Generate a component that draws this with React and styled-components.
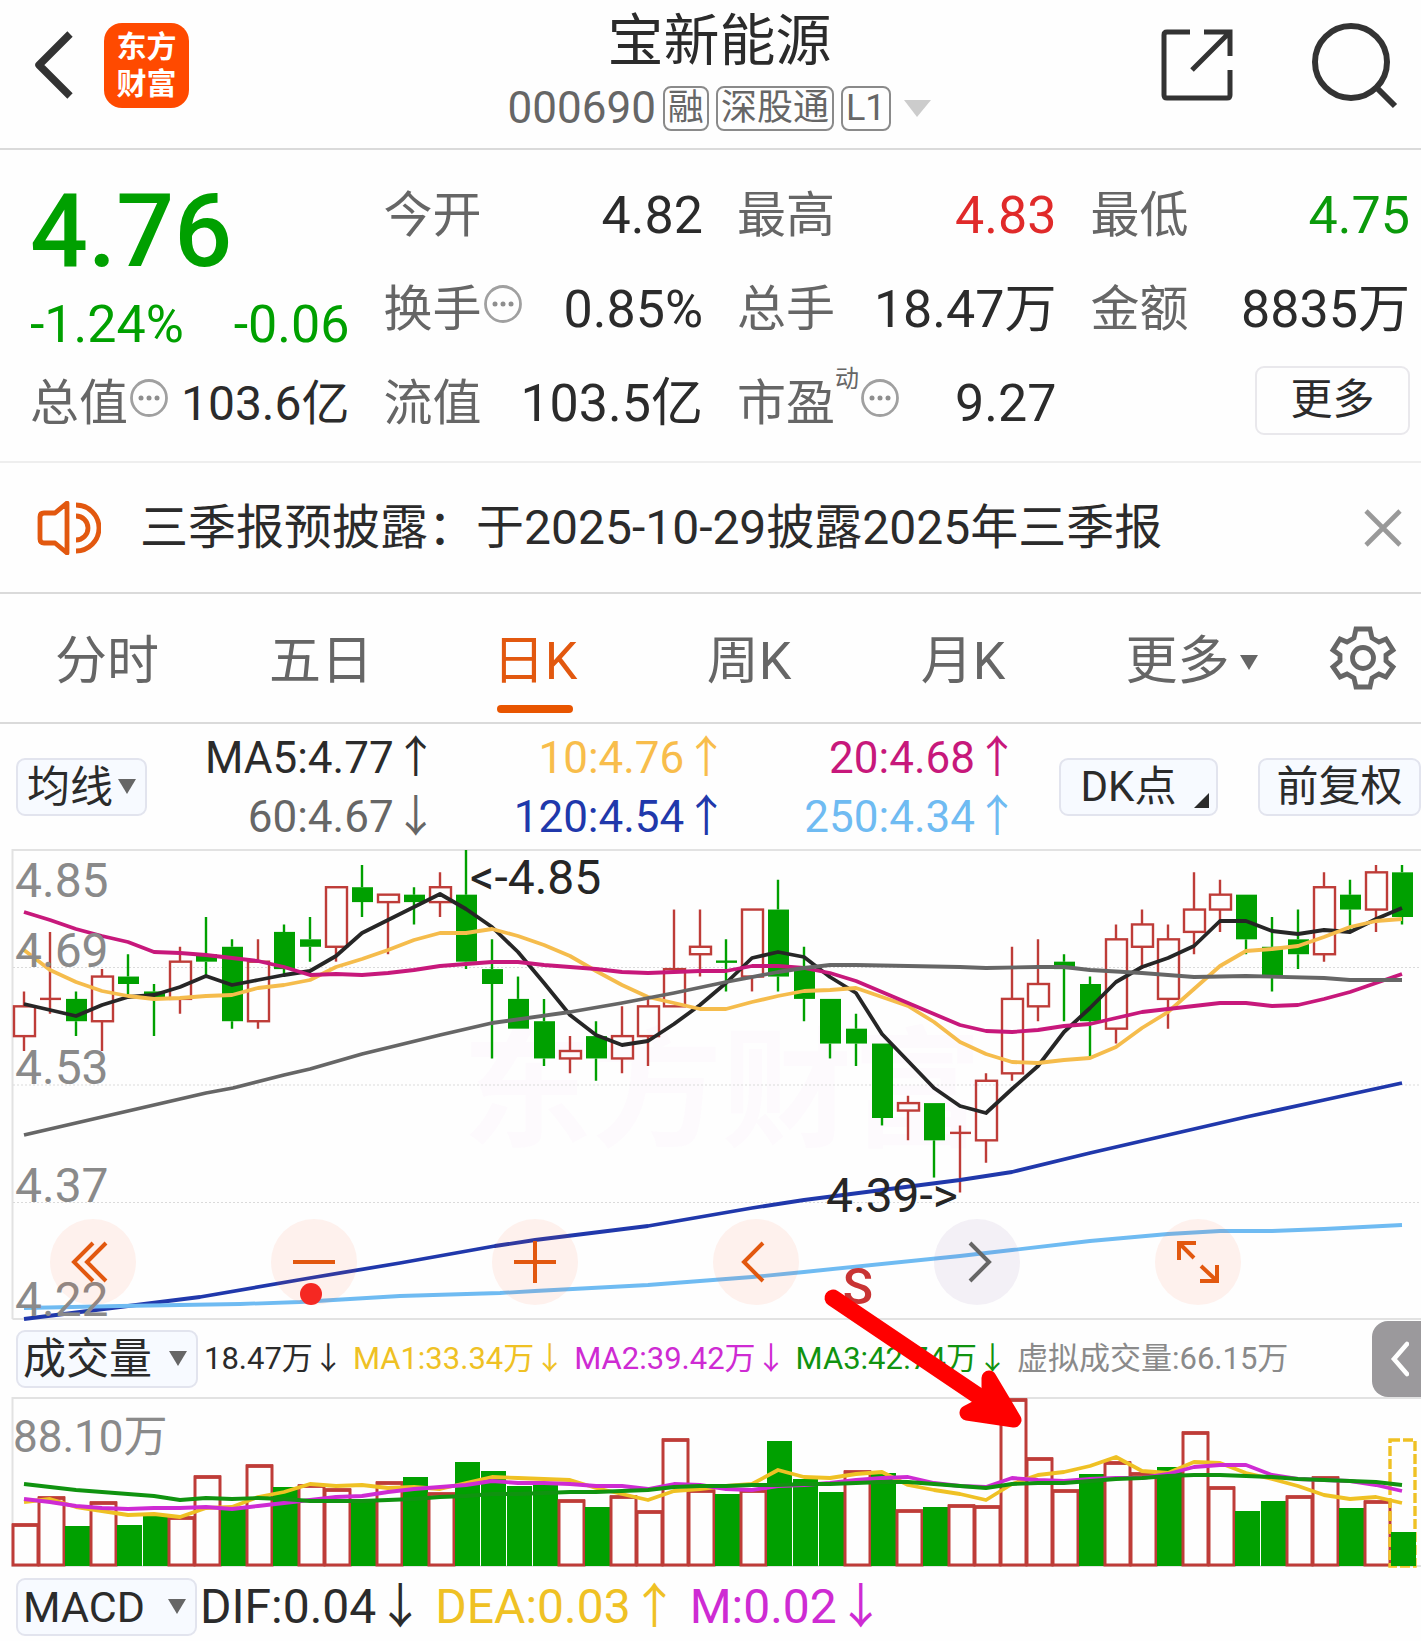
import React, { useState } from 'react';
import styled, { createGlobalStyle } from 'styled-components';

const GlobalStyle = createGlobalStyle`
	* {
		box-sizing: border-box;
	}

	body {
		margin: 0;
		background: #FEFEFE;
		color: #2B2B2B;
		font-family: Roboto, 'Noto Sans CJK SC', sans-serif;
	}

	button, select {
		font-family: inherit;
		color: inherit;
		background: none;
		border: 0;
		padding: 0;
		margin: 0;
		cursor: pointer;
	}

	svg {
		display: block;
	}
`;

const Page = styled.div`
	width: 100%;
	overflow: hidden;
`;

const Header = styled.header`
	display: grid;
	grid-template-columns: 1fr auto 1fr;
	height: 150px;
	padding: 0 14px 0 32px;
	border-bottom: 2px solid #DADADA;
`;

const HeaderSide = styled.div`
	display: flex;
	align-items: center;
	justify-content: ${(props) => (props.$end ? 'flex-end' : 'flex-start')};
	gap: ${(props) => (props.$end ? '76px' : '30px')};
	padding-bottom: 18px;
`;

const Logo = styled.a`
	display: flex;
	align-items: center;
	justify-content: center;
	width: 85px;
	height: 85px;
	border-radius: 18px;
	background: #FF4A00;
	color: #FFFFFF;
	font-size: 30px;
	line-height: 37px;
	font-weight: 700;
	text-align: center;
	text-decoration: none;
`;

const TitleBlock = styled.div`
	display: flex;
	flex-direction: column;
	align-items: center;
	padding-top: 7px;
`;

const Title = styled.h1`
	margin: 0;
	font-size: 56px;
	line-height: 68px;
	font-weight: 400;
`;

const SubTitle = styled.div`
	display: flex;
	align-items: center;
	gap: 7px;
	height: 66px;
	color: #666666;
	font-size: 44px;
`;

const Tag = styled.span`
	display: flex;
	align-items: center;
	height: 45px;
	padding: 0 3px;
	border: 2px solid #8A8A8A;
	border-radius: 8px;
	font-size: 36px;
	line-height: 40px;
`;

const Quote = styled.section`
	display: grid;
	grid-template-columns: repeat(4, 1fr);
	grid-template-rows: repeat(3, 94px);
	column-gap: 34px;
	padding: 19px 11px 10px 30px;
	border-bottom: 2px solid #EEEEEE;
`;

const PriceBlock = styled.div`
	grid-row: span 2;
	color: #00A000;
`;

const Price = styled.div`
	font-size: 102px;
	line-height: 124px;
	font-weight: 500;
`;

const Change = styled.div`
	display: flex;
	justify-content: space-between;
	font-size: 52px;
	line-height: 64px;
`;

const Stat = styled.div`
	display: flex;
	align-items: center;
	line-height: 60px;
	white-space: nowrap;
`;

const StatLabel = styled.span`
	color: #666666;
	font-size: 49px;
`;

const StatMark = styled.sup`
	align-self: flex-start;
	color: #666666;
	font-size: 24px;
	line-height: 32px;
	padding-top: 6px;
`;

const InfoButton = styled.button`
	margin: 0 0 12px 2px;
`;

const StatValue = styled.span`
	margin-left: auto;
	font-size: ${(props) => (props.$tight ? '48px' : '52px')};
	color: ${(props) => props.$color || '#2B2B2B'};
`;

const MoreButton = styled.button`
	justify-self: end;
	align-self: center;
	width: 155px;
	height: 69px;
	margin-bottom: 8px;
	border: 2px solid #E9E8EC;
	border-radius: 9px;
	font-size: 42px;
	line-height: 56px;
`;

const Notice = styled.section`
	display: flex;
	align-items: center;
	height: 131px;
	padding: 0 18px 0 37px;
	border-bottom: 2px solid #DADADA;
`;

const NoticeText = styled.p`
	flex: 1;
	margin: 0 0 0 39px;
	font-size: 48px;
	line-height: 64px;
	white-space: nowrap;
`;

const Tabs = styled.nav`
	display: flex;
	height: 130px;
	padding-right: 24px;
	border-bottom: 2px solid #DADADA;
`;

const Tab = styled.button`
	position: relative;
	display: flex;
	align-items: center;
	justify-content: center;
	gap: 10px;
	flex: ${(props) => (props.$wide ? 243 : 214)} 1 0;
	padding-top: 8px;
	font-size: 52px;
	line-height: 64px;
	color: ${(props) => (props.$active ? '#E2580F' : '#666666')};

	&::after {
		content: '';
		position: absolute;
		left: 50%;
		bottom: 9px;
		width: 76px;
		height: 8px;
		margin-left: -38px;
		border-radius: 4px;
		background: ${(props) => (props.$active ? '#E85500' : 'transparent')};
	}
`;

const SettingsButton = styled.button`
	margin-left: 16px;
`;

const Averages = styled.section`
	display: flex;
	align-items: center;
	height: 126px;
	padding-left: 16px;
`;

const Chip = styled.button`
	position: relative;
	flex: none;
	width: ${(props) => props.$width};
	height: 58px;
	margin-left: 40px;
	padding-right: ${(props) => (props.$corner ? '20px' : '0')};
	border: 2px solid #E2E4EE;
	border-radius: 9px;
	background: #F7FAFF;
	font-size: 42px;
	line-height: 52px;
	white-space: nowrap;
`;

const CornerMark = styled.svg`
	position: absolute;
	right: 7px;
	bottom: 6px;
`;

const SelectBox = styled.label`
	position: relative;
	flex: none;
	width: ${(props) => props.$width};
	height: 58px;
`;

const Select = styled.select`
	appearance: none;
	width: 100%;
	height: 100%;
	padding-left: ${(props) => (props.$narrow ? '9px' : '5px')};
	border: 2px solid #E2E4EE;
	border-radius: 9px;
	background: #F7FAFF;
	font-size: 43px;
`;

const SelectCaret = styled.svg`
	position: absolute;
	top: 21px;
	right: 11px;
	pointer-events: none;
`;

const AverageGrid = styled.div`
	flex: 1;
	display: grid;
	grid-template-columns: repeat(3, 1fr);
	grid-auto-rows: 59px;
	text-align: right;
	font-size: 44px;
	line-height: 60px;
	white-space: nowrap;
`;

const Colored = styled.span`
	color: ${(props) => props.$color};
`;

const Charts = styled.div`
	position: relative;
`;

const ChartBox = styled.div`
	position: relative;
`;

const Drawing = styled.svg`
	width: 100%;
	height: auto;
	overflow: visible;
`;

const Overlay = styled.svg`
	position: absolute;
	top: 0;
	left: 0;
	width: 100%;
	height: auto;
	pointer-events: none;
`;

const ChartTools = styled.div`
	position: absolute;
	left: 50px;
	right: 180px;
	bottom: 14px;
	display: flex;
	justify-content: space-between;
`;

const Tool = styled.button`
	position: relative;
	width: 86px;
	height: 86px;
	border-radius: 50%;
	background: ${(props) => (props.$muted ? 'rgba(120, 80, 150, 0.08)' : 'rgba(250, 90, 40, 0.08)')};
	color: ${(props) => (props.$muted ? '#666666' : '#E2580F')};
`;

const Dot = styled.span`
	position: absolute;
	left: 29px;
	bottom: 0;
	width: 22px;
	height: 22px;
	border-radius: 50%;
	background: #F52822;
`;

const VolumeBar = styled.div`
	display: flex;
	align-items: center;
	height: 79px;
	padding-left: 16px;
`;

const VolumeValues = styled.div`
	display: flex;
	flex: 1;
	gap: 9px;
	padding-left: 6px;
	font-size: 31px;
	line-height: 48px;
	white-space: nowrap;
`;

const Handle = styled.button`
	display: flex;
	align-items: center;
	justify-content: center;
	width: 49px;
	height: 76px;
	border-radius: 16px 0 0 16px;
	background: #9B999C;
`;

const MacdBar = styled.div`
	display: flex;
	align-items: center;
	height: 74px;
	padding: 6px 0 0 16px;
`;

const MacdValues = styled.div`
	display: flex;
	gap: 11px;
	padding-left: 3px;
	font-size: 48px;
	line-height: 58px;
	white-space: nowrap;
`;

const RED = '#BE3C38';
const GREEN = '#00A000';
const STEP = 26;
const FIRST = 24;
const CENT = 469 / 63;

// [up, high, body top, body bottom, low], in cents below 4.85
const candles = [
	[1, 19, 21, 25, 27], [1, 11, 20, 20, 22], [0, 19, 20, 23, 25], [1, 16, 17, 23, 27], [0, 14, 17, 18, 20], [0, 18, 19, 20, 25],
	[1, 13, 15, 20, 22], [0, 9, 14, 15, 17], [0, 12, 13, 23, 24], [1, 12, 15, 23, 24], [0, 10, 11, 16, 17], [0, 9, 12, 13, 15],
	[1, 5, 5, 13, 15], [0, 2, 5, 7, 9], [1, 6, 6, 7, 14], [0, 5, 6, 7, 10], [1, 3, 5, 7, 9], [0, 0, 6, 15, 16],
	[0, 12, 16, 18, 28], [0, 17, 20, 24, 24], [0, 20, 23, 28, 29], [1, 25, 27, 28, 30], [0, 23, 25, 28, 31], [1, 21, 25, 28, 30],
	[1, 20, 21, 25, 29], [1, 8, 16, 21, 21], [1, 8, 13, 14, 17], [0, 12, 15, 15, 19], [1, 8, 8, 17, 19], [0, 4, 8, 17, 19],
	[0, 13, 16, 20, 23], [0, 20, 20, 26, 28], [0, 22, 24, 26, 29], [0, 26, 26, 36, 37], [1, 33, 34, 35, 39], [0, 34, 34, 39, 44],
	[1, 37, 38, 38, 46], [1, 30, 31, 39, 42], [1, 13, 20, 30, 31], [1, 12, 18, 21, 23], [0, 14, 15, 16, 23], [0, 17, 18, 23, 28],
	[1, 10, 12, 24, 26], [1, 8, 10, 13, 16], [1, 10, 12, 20, 24], [1, 3, 8, 11, 14], [1, 4, 6, 8, 11], [0, 6, 6, 12, 14],
	[0, 9, 13, 17, 19], [0, 8, 12, 14, 16], [1, 3, 5, 14, 15], [0, 4, 6, 8, 11], [1, 2, 3, 8, 11], [0, 2, 3, 9, 10],
];

const ma5 = [154, 160, 166, 155, 147, 145, 137, 126, 135, 130, 125, 121, 106, 83, 70, 57, 44, 59, 77, 102, 133, 165, 185, 195, 191, 174, 155, 133, 108, 102, 107, 127, 143, 184, 211, 238, 256, 263, 239, 216, 182, 158, 132, 117, 108, 96, 71, 71, 81, 84, 80, 82, 69, 58];
const ma10 = [100, 120, 132, 141, 146, 149, 148, 146, 145, 138, 135, 130, 117, 109, 100, 90, 83, 83, 79, 86, 95, 106, 121, 135, 147, 153, 159, 159, 152, 146, 141, 140, 138, 147, 156, 172, 192, 204, 212, 213, 210, 208, 197, 178, 162, 139, 116, 101, 99, 96, 87, 77, 71, 69];
const ma20 = [62, 70, 79, 86, 92, 102, 103, 105, 108, 111, 117, 125, 124, 125, 123, 120, 116, 114, 112, 112, 115, 117, 119, 122, 123, 122, 121, 121, 116, 116, 118, 123, 131, 142, 153, 164, 175, 181, 182, 180, 176, 174, 168, 162, 159, 156, 153, 153, 156, 155, 149, 142, 133, 124];

const ma60 = '24,285 206,243 233,238 284,225 310,219 362,204 440,185 492,173 570,162 622,153 674,143 726,132 778,122 804,118 830,115 856,115 960,117 986,118 1038,117 1064,117 1090,120 1142,123 1194,127 1246,126 1324,128 1350,130 1402,130';
const ma120 = '24,469 120,457 200,447 310,428 400,413 495,396 535,390 648,376 752,358 804,350 960,330 1012,322 1090,303 1168,285 1246,267 1324,250 1402,233';
const ma250 = '24,458 120,456 240,454 300,452 400,446 500,443 535,441 648,435 752,427 804,422 960,406 1012,400 1090,391 1168,384 1220,381 1246,381 1272,381 1324,379 1402,375';

const volumes = [126, 99, 128, 104, 127, 118, 119, 78, 111, 67, 89, 87, 91, 102, 84, 79, 95, 64, 73, 88, 86, 102, 109, 98, 113, 41, 92, 96, 92, 43, 81, 94, 73, 75, 112, 109, 107, 108, 1, 60, 92, 76, 64, 75, 69, 34, 89, 113, 103, 98, 79, 110, 103, 134];
const hollowVolumes = [0, 1, 3, 6, 7, 9, 11, 12, 14, 16, 21, 23, 24, 25, 26, 28, 32, 34, 36, 37, 38, 39, 40, 42, 43, 45, 46, 49, 50, 52];
const volMa1 = [104, 101, 109, 113, 117, 116, 119, 110, 109, 99, 94, 86, 88, 87, 90, 89, 91, 85, 79, 80, 81, 82, 90, 96, 102, 93, 91, 88, 86, 72, 79, 80, 76, 74, 87, 92, 96, 102, 86, 77, 74, 68, 59, 73, 75, 64, 65, 75, 81, 88, 97, 101, 99, 105];
const volMa2 = [101, 104, 108, 110, 111, 110, 110, 109, 111, 108, 105, 102, 99, 98, 94, 91, 89, 87, 83, 85, 85, 86, 88, 88, 91, 86, 87, 91, 92, 88, 87, 85, 82, 80, 79, 85, 88, 89, 80, 82, 83, 81, 80, 80, 76, 69, 67, 67, 77, 81, 82, 83, 87, 93];
const volMa3 = [86, 89, 92, 94, 96, 98, 102, 100, 101, 100, 101, 103, 103, 103, 102, 101, 99, 98, 96, 96, 95, 94, 94, 93, 92, 89, 88, 88, 87, 87, 86, 86, 85, 84, 84, 86, 88, 90, 86, 85, 85, 83, 81, 80, 78, 77, 77, 78, 79, 81, 82, 83, 84, 87];

const averages = [
	['MA5:4.77↑', '#2B2B2B'],
	['10:4.76↑', '#F8BD4B'],
	['20:4.68↑', '#C7187B'],
	['60:4.67↓', '#666666'],
	['120:4.54↑', '#2038AB'],
	['250:4.34↑', '#6FBBF2'],
];

const volumeValues = [
	['18.47万↓', '#2B2B2B'],
	['MA1:33.34万↓', '#EFC124'],
	['MA2:39.42万↓', '#CE2BD3'],
	['MA3:42.74万↓', '#109310'],
	['虚拟成交量:66.15万', '#8A8A8A'],
];

const macdValues = [
	['DIF:0.04↓', '#2B2B2B'],
	['DEA:0.03↑', '#EFC124'],
	['M:0.02↓', '#CE2BD3'],
];

const axis = [['4.85', 47], ['4.69', 117], ['4.53', 234], ['4.37', 352], ['4.22', 466]];

const tabNames = ['分时', '五日', '日K', '周K', '月K', '更多'];

const toPoints = (list) => list.map((y, i) => `${FIRST + i * STEP},${y}`).join(' ');

const Caret = () => (
	<svg width="18" height="15" viewBox="0 0 18 15"><path d="M0 0H18L9 15Z" fill="#666666" /></svg>
);

const Info = ({ label }) => (
	<InfoButton aria-label={label}>
		<svg width="38" height="38" viewBox="0 0 38 38">
			<circle cx="19" cy="19" r="17.5" fill="none" stroke="#A0A0A0" strokeWidth="2.8" />
			<circle cx="11" cy="19" r="2.5" fill="#8E8E8E" />
			<circle cx="19" cy="19" r="2.5" fill="#8E8E8E" />
			<circle cx="27" cy="19" r="2.5" fill="#8E8E8E" />
		</svg>
	</InfoButton>
);

const Dropdown = ({ name, options, width, narrow }) => (
	<SelectBox $width={width}>
		<Select aria-label={name} $narrow={narrow} defaultValue={options[0]}>
			{options.map((option) => <option key={option}>{option}</option>)}
		</Select>
		<SelectCaret width="18" height="15" viewBox="0 0 18 15"><path d="M0 0H18L9 15Z" fill="#666666" /></SelectCaret>
	</SelectBox>
);

const Line = ({ points, color }) => (
	<polyline points={points} fill="none" stroke={color} strokeWidth="3.8" strokeLinejoin="round" />
);

const Candle = ({ data, index }) => {
	const [up, high, top, bottom, low] = data;
	const x = FIRST + index * STEP;
	const color = up ? RED : GREEN;
	const bodyTop = top * CENT;
	const bodyBottom = bottom * CENT;

	return (
		<g stroke={color} strokeWidth="2.4">
			<path d={`M${x} ${high * CENT}V${bodyTop}M${x} ${bodyBottom}V${low * CENT}`} />
			{top === bottom && <path d={`M${x - 10} ${bodyTop}H${x + 11}`} />}
			{top !== bottom && up === 1 && <rect x={x - 10} y={bodyTop} width="21" height={bodyBottom - bodyTop} fill="none" />}
			{top !== bottom && up === 0 && <rect x={x - 10} y={bodyTop} width="21" height={bodyBottom - bodyTop} fill={color} stroke="none" />}
		</g>
	);
};

const KLineChart = () => (
	<Drawing viewBox="0 0 1421 469">
		<text x="462" y="286" fontSize="130" fontWeight="700" fill="#FDFAFD">东方财富</text>
		<path d="M12.5 469V0H1421M12.5 469H1421" fill="none" stroke="#E2E2E2" strokeWidth="2" />
		<path d="M13 117.5H1421M13 235H1421M13 352.5H1421" stroke="#DADADA" strokeWidth="1.2" strokeDasharray="2 2" />
		{candles.map((data, index) => <Candle key={index} data={data} index={index} />)}
		<Line points={toPoints(ma5)} color="#262626" />
		<Line points={toPoints(ma10)} color="#F5BC4C" />
		<Line points={toPoints(ma20)} color="#C7187B" />
		<Line points={ma60} color="#666666" />
		<Line points={ma120} color="#2038AB" />
		<Line points={ma250} color="#6FBBF2" />
		<g fontSize="48" fill="#8A8A8A">
			{axis.map(([label, y]) => <text key={label} x="15" y={y}>{label}</text>)}
		</g>
		<g fontSize="48" fill="#262626">
			<text x="470" y="44">&lt;-4.85</text>
			<text x="826" y="362">4.39-&gt;</text>
		</g>
	</Drawing>
);

const VolumeChart = () => (
	<Drawing viewBox="0 0 1421 169">
		<path d="M12.5 169V0H1421M12.5 168H1421" fill="none" stroke="#E2E2E2" strokeWidth="2" />
		<text x="13" y="54" fontSize="44" fill="#8A8A8A">88.10万</text>
		{volumes.map((top, index) => {
			const x = FIRST + index * STEP;
			return hollowVolumes.includes(index) ? (
				<g key={index}>
					<rect x={x - 11} y={top + 1} width="25" height={166 - top} fill="#FEFEFE" stroke={RED} strokeWidth="3" />
					<path d={`M${x - 12} ${top + 1}H${x + 15}`} stroke={RED} strokeWidth="3.6" />
				</g>
			) : (
				<rect key={index} x={x - 11} y={top} width="25" height={168 - top} fill={GREEN} />
			);
		})}
		<rect x="1390" y="42" width="25" height="126" fill="none" stroke="#EFC124" strokeWidth="3.4" strokeDasharray="10 3" />
		<rect x="1391" y="134" width="25" height="34" fill={GREEN} />
		<Line points={toPoints(volMa1)} color="#EFC124" />
		<Line points={toPoints(volMa2)} color="#CE2BD3" />
		<Line points={toPoints(volMa3)} color="#109310" />
	</Drawing>
);

const toolIcons = [
	['最早', 'M43 24L24 43L43 62M56 24L37 43L56 62'],
	['缩小', 'M22 43H64'],
	['放大', 'M22 43H64M43 22V64'],
	['向左', 'M50 24L31 43L50 62'],
	['向右', 'M36 24L55 43L36 62'],
	['全屏', 'M24 41V24H41M24 24L39 39M62 46V62H45M62 62L46 47'],
];

const App = () => {
	const [activeTab, setActiveTab] = useState('日K');
	const [noticeOpen, setNoticeOpen] = useState(true);

	function renderTabs() {
		return tabNames.map((name) => (
			<Tab key={name} $active={name === activeTab} $wide={name === '更多'} onClick={() => setActiveTab(name)}>
				{name}
				{name === '更多' && <Caret />}
			</Tab>
		));
	}

	function renderValues(list) {
		return list.map(([text, color]) => <Colored key={text} $color={color}>{text}</Colored>);
	}

	return (
		<Page>
			<GlobalStyle />
			<Header>
				<HeaderSide>
					<button aria-label="返回">
						<svg width="42" height="70" viewBox="0 0 42 70" fill="none" stroke="#333333" strokeWidth="7.5" strokeLinejoin="round">
							<path d="M38 4L7 35L38 66" />
						</svg>
					</button>
					<Logo href="#">东方<br />财富</Logo>
				</HeaderSide>
				<TitleBlock>
					<Title>宝新能源</Title>
					<SubTitle>
						000690
						<Tag>融</Tag>
						<Tag>深股通</Tag>
						<Tag>L1</Tag>
						<svg width="34" height="17" viewBox="0 0 34 17"><path d="M6 0H33L19 17Z" fill="#CCCCCC" /></svg>
					</SubTitle>
				</TitleBlock>
				<HeaderSide $end>
					<button aria-label="分享">
						<svg width="72" height="72" viewBox="0 0 72 72" fill="none" stroke="#333333" strokeWidth="5">
							<path d="M29 3H6Q3 3 3 6V66Q3 69 6 69H66Q69 69 69 66V41M43 3H69V27M69 3L31 41" />
						</svg>
					</button>
					<button aria-label="搜索">
						<svg width="98" height="90" viewBox="0 0 98 90" fill="none" stroke="#333333" strokeWidth="6">
							<circle cx="42" cy="42" r="36" />
							<path d="M67 67L86 86" />
						</svg>
					</button>
				</HeaderSide>
			</Header>

			<Quote>
				<PriceBlock>
					<Price>4.76</Price>
					<Change><span>-1.24%</span><span>-0.06</span></Change>
				</PriceBlock>
				<Stat><StatLabel>今开</StatLabel><StatValue>4.82</StatValue></Stat>
				<Stat><StatLabel>最高</StatLabel><StatValue $color="#E02A2A">4.83</StatValue></Stat>
				<Stat><StatLabel>最低</StatLabel><StatValue $color="#0A9A0A">4.75</StatValue></Stat>
				<Stat><StatLabel>换手</StatLabel><Info label="换手说明" /><StatValue>0.85%</StatValue></Stat>
				<Stat><StatLabel>总手</StatLabel><StatValue>18.47万</StatValue></Stat>
				<Stat><StatLabel>金额</StatLabel><StatValue>8835万</StatValue></Stat>
				<Stat><StatLabel>总值</StatLabel><Info label="总值说明" /><StatValue $tight>103.6亿</StatValue></Stat>
				<Stat><StatLabel>流值</StatLabel><StatValue>103.5亿</StatValue></Stat>
				<Stat><StatLabel>市盈</StatLabel><StatMark>动</StatMark><Info label="市盈说明" /><StatValue>9.27</StatValue></Stat>
				<MoreButton>更多</MoreButton>
			</Quote>

			{noticeOpen && (
				<Notice>
					<svg width="64" height="54" viewBox="0 0 64 54" fill="none" stroke="#E2580F" strokeWidth="4.8" strokeLinejoin="round">
						<path d="M3 16Q3 12 7 12H18L30 2V52L18 42H7Q3 42 3 38Z" />
						<path d="M39 15A12 12 0 0 1 39 39M39 4A23 23 0 0 1 39 50" />
					</svg>
					<NoticeText>三季报预披露：于2025-10-29披露2025年三季报</NoticeText>
					<button aria-label="关闭" onClick={() => setNoticeOpen(false)}>
						<svg width="40" height="40" viewBox="0 0 40 40" stroke="#999999" strokeWidth="4.6"><path d="M3 3L37 37M37 3L3 37" /></svg>
					</button>
				</Notice>
			)}

			<Tabs>
				{renderTabs()}
				<SettingsButton aria-label="设置">
					<svg width="68" height="68" viewBox="0 0 68 68" fill="none" stroke="#666666" strokeWidth="4.8">
						<path d="M27 5H41L43 14L50 18L57 15L64 26L57 31V37L64 43L57 53L50 50L43 54L41 63H27L25 54L18 50L11 53L4 43L11 37V31L4 26L11 15L18 18L25 14Z" />
						<circle cx="34" cy="34" r="10.5" />
					</svg>
				</SettingsButton>
			</Tabs>

			<Averages>
				<Dropdown name="主图指标" options={['均线', 'BOLL']} width="131px" narrow />
				<AverageGrid>{renderValues(averages)}</AverageGrid>
				<Chip $width="159px" $corner>
					DK点
					<CornerMark width="15" height="15" viewBox="0 0 15 15"><path d="M15 0V15H0Z" fill="#2B2B2B" /></CornerMark>
				</Chip>
				<Chip $width="163px">前复权</Chip>
			</Averages>

			<Charts>
				<ChartBox>
					<KLineChart />
					<ChartTools>
						{toolIcons.map(([label, path], index) => (
							<Tool key={label} aria-label={label} $muted={label === '向右'}>
								<svg width="86" height="86" viewBox="0 0 86 86" fill="none" stroke="currentColor" strokeWidth="4"><path d={path} /></svg>
								{index === 1 && <Dot />}
							</Tool>
						))}
					</ChartTools>
				</ChartBox>
				<VolumeBar>
					<Dropdown name="副图指标一" options={['成交量', '成交额']} width="182px" />
					<VolumeValues>{renderValues(volumeValues)}</VolumeValues>
					<Handle aria-label="展开">
						<svg width="24" height="36" viewBox="0 0 24 36" fill="none" stroke="#FFFFFF" strokeWidth="4.6" strokeLinecap="round"><path d="M22 3L9 18L22 33" /></svg>
					</Handle>
				</VolumeBar>
				<VolumeChart />
				<Overlay viewBox="0 0 1421 717">
					<text x="858" y="454" textAnchor="middle" fontSize="50" fontWeight="500" fill="#C83434">S</text>
					<g stroke="#FF0000" strokeLinecap="round" strokeLinejoin="round">
						<path d="M833 448L1002 562" fill="none" strokeWidth="17" />
						<path d="M989 528L1014 570L967 563L984 554L989 545Z" fill="#FF0000" strokeWidth="15" />
					</g>
				</Overlay>
			</Charts>

			<MacdBar>
				<Dropdown name="副图指标二" options={['MACD', 'KDJ']} width="181px" />
				<MacdValues>{renderValues(macdValues)}</MacdValues>
			</MacdBar>
		</Page>
	);
};

export default App;
